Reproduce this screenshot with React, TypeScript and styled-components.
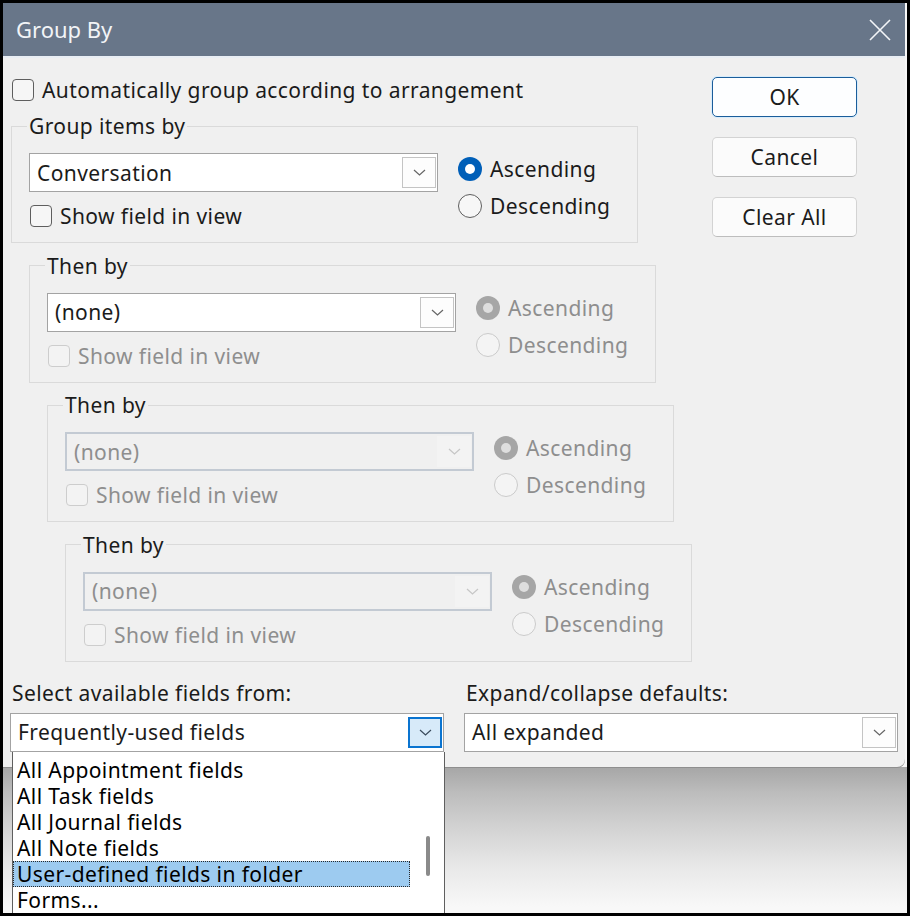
import styled, { createGlobalStyle } from 'styled-components';

const GlobalStyle = createGlobalStyle`
  html, body {
    margin: 0;
    padding: 0;
    background: #000;
  }

  body {
    font-family: 'Noto Sans', 'Open Sans', sans-serif;
    font-size: 21px;
    letter-spacing: 0.4px;
    color: #1b1b1b;
  }
`;

const Chevron = ({ color = '#5f5f5f' }: { color?: string }) => (
  <svg width='13' height='7' viewBox='0 0 13 7'>
    <path d='M1 1 L6.5 6 L12 1' fill='none' stroke={color} strokeWidth='1.2' />
  </svg>
);

type SelectProps = {
  value: string;
  disabled?: boolean;
  focused?: boolean;
};

const Select = ({ value, disabled, focused }: SelectProps) => (
  <SelectBox $disabled={disabled}>
    <span>{value}</span>
    <ArrowButton $disabled={disabled} $focused={focused}>
      <Chevron color={disabled ? '#c6c6c6' : focused ? '#3a4b5c' : '#666666'} />
    </ArrowButton>
  </SelectBox>
);

type GroupProps = {
  title: string;
  indent: number;
  value: string;
  ascending: boolean;
  selectDisabled?: boolean;
  optionsDisabled?: boolean;
};

const SortGroup = ({ title, indent, value, ascending, selectDisabled, optionsDisabled }: GroupProps) => (
  <GroupBox $indent={indent}>
    <Legend>{title}</Legend>
    <GroupInner>
      <FieldStack>
        <Select value={value} disabled={selectDisabled} />
        <CheckRow $disabled={optionsDisabled}>
          <CheckBox $disabled={optionsDisabled} />
          Show field in view
        </CheckRow>
      </FieldStack>
      <RadioStack>
        <RadioRow $disabled={optionsDisabled}>
          <RadioDot $checked={ascending} $disabled={optionsDisabled} />
          Ascending
        </RadioRow>
        <RadioRow $disabled={optionsDisabled}>
          <RadioDot $checked={!ascending} $disabled={optionsDisabled} />
          Descending
        </RadioRow>
      </RadioStack>
    </GroupInner>
  </GroupBox>
);

const fieldSources = [
  'All Appointment fields',
  'All Task fields',
  'All Journal fields',
  'All Note fields',
  'User-defined fields in folder',
  'Forms...',
];

const App = () => {
  return (
    <>
      <GlobalStyle />
      <Screen>
        <Dialog>
          <TitleBar>
            <Title>Group By</Title>
            <CloseButton>
              <svg width='22' height='22' viewBox='0 0 22 22'>
                <path d='M1 1 L21 21 M21 1 L1 21' stroke='#f3f5f8' strokeWidth='1.6' />
              </svg>
            </CloseButton>
          </TitleBar>
          <Body>
            <TopArea>
              <LeftColumn>
                <CheckRow>
                  <CheckBox />
                  Automatically group according to arrangement
                </CheckRow>
                <Groups>
                  <SortGroup title='Group items by' indent={0} value='Conversation' ascending />
                  <SortGroup title='Then by' indent={18} value='(none)' ascending optionsDisabled />
                  <SortGroup title='Then by' indent={36} value='(none)' ascending selectDisabled optionsDisabled />
                  <SortGroup title='Then by' indent={54} value='(none)' ascending selectDisabled optionsDisabled />
                </Groups>
              </LeftColumn>
              <ButtonColumn>
                <DialogButton $primary>OK</DialogButton>
                <DialogButton>Cancel</DialogButton>
                <DialogButton>Clear All</DialogButton>
              </ButtonColumn>
            </TopArea>
            <Footer>
              <Field>
                <FieldLabel>Select available fields from:</FieldLabel>
                <SelectWrap>
                  <Select value='Frequently-used fields' focused />
                  <DropList>
                    {fieldSources.map((item) => (
                      <ListItem key={item} $selected={item.startsWith('User')}>
                        {item}
                      </ListItem>
                    ))}
                    <ScrollThumb />
                  </DropList>
                </SelectWrap>
              </Field>
              <Field>
                <FieldLabel>Expand/collapse defaults:</FieldLabel>
                <Select value='All expanded' />
              </Field>
            </Footer>
          </Body>
        </Dialog>
        <Shade />
      </Screen>
    </>
  );
};

const Screen = styled.div`
  width: 910px;
  height: 916px;
  box-sizing: border-box;
  border: 3px solid #000;
  display: flex;
  flex-direction: column;
  overflow: hidden;
  background: #f7f7f7;
`;

const Dialog = styled.div`
  flex: none;
  width: 902px;
  background: #f0f0f0;
  border-bottom-right-radius: 8px;
  position: relative;
  z-index: 1;
  box-shadow: 0 1px 0 #8e8e8e;
`;

const Shade = styled.div`
  flex: none;
  height: 170px;
  background: linear-gradient(to bottom, #a6a6a6 0px, #bcbcbc 25px, #d2d2d2 60px, #e8e8e8 100px, #f8f8f8 140px);
`;

const TitleBar = styled.div`
  height: 53px;
  background: #687689;
  border-bottom: 2px solid #e9eef4;
  display: flex;
  align-items: center;
  justify-content: space-between;
  padding: 0 14px 0 13px;
`;

const Title = styled.div`
  font-size: 22px;
  letter-spacing: 0;
  color: #f2f4f7;
  margin-top: -2px;
`;

const CloseButton = styled.div`
  width: 22px;
  height: 22px;
  display: flex;
`;

const Body = styled.div`
  padding: 19px 0 15px;
`;

const TopArea = styled.div`
  display: grid;
  grid-template-columns: 680px 145px;
  column-gap: 21px;
  padding-left: 8px;
`;

const LeftColumn = styled.div`
  display: flex;
  flex-direction: column;
`;

const Groups = styled.div`
  display: flex;
  flex-direction: column;
  gap: 9.5px;
  margin-top: 10px;
`;

const CheckRow = styled.label<{ $disabled?: boolean }>`
  display: flex;
  align-items: center;
  gap: 8px;
  height: 26px;
  padding-left: 1px;
  color: ${({ $disabled }) => ($disabled ? '#8e8e8e' : '#1b1b1b')};
  white-space: nowrap;
`;

const CheckBox = styled.span<{ $disabled?: boolean }>`
  width: 22px;
  height: 22px;
  box-sizing: border-box;
  border: 1.5px solid ${({ $disabled }) => ($disabled ? '#cdcdcd' : '#5e5e5e')};
  border-radius: 4px;
  background: ${({ $disabled }) => ($disabled ? '#f3f3f3' : '#f6f6f6')};
  flex-shrink: 0;
`;

const GroupBox = styled.fieldset<{ $indent: number }>`
  margin: 0 0 0 ${({ $indent }) => $indent}px;
  padding: 0 0 13px 17px;
  width: 627px;
  box-sizing: border-box;
  border: 1px solid #dadada;
  min-width: 0;
`;

const Legend = styled.legend`
  padding: 0 2px;
  margin-left: -2px;
  line-height: 26px;
  color: #1b1b1b;
`;

const GroupInner = styled.div`
  display: flex;
  gap: 20px;
  padding-top: 14px;
`;

const FieldStack = styled.div`
  width: 409px;
  display: flex;
  flex-direction: column;
  gap: 11px;
`;

const RadioStack = styled.div`
  display: flex;
  flex-direction: column;
  margin-top: -3px;
`;

const RadioRow = styled.label<{ $disabled?: boolean }>`
  display: flex;
  align-items: center;
  gap: 8px;
  height: 37px;
  color: ${({ $disabled }) => ($disabled ? '#8e8e8e' : '#1b1b1b')};
`;

const RadioDot = styled.span<{ $checked?: boolean; $disabled?: boolean }>`
  width: 24px;
  height: 24px;
  box-sizing: border-box;
  border-radius: 50%;
  flex-shrink: 0;
  position: relative;
  background: ${({ $checked, $disabled }) =>
    $checked ? ($disabled ? '#a6a6a6' : '#005fb8') : $disabled ? '#f4f4f4' : '#f7f7f7'};
  border: ${({ $checked, $disabled }) =>
    $checked ? 'none' : `1.5px solid ${$disabled ? '#cbcbcb' : '#5e5e5e'}`};

  &::after {
    content: '';
    display: ${({ $checked }) => ($checked ? 'block' : 'none')};
    position: absolute;
    left: 50%;
    top: 50%;
    width: 10px;
    height: 10px;
    border-radius: 50%;
    transform: translate(-50%, -50%);
    background: ${({ $disabled }) => ($disabled ? '#dedede' : '#ffffff')};
  }
`;

const SelectBox = styled.div<{ $disabled?: boolean }>`
  height: 39px;
  box-sizing: border-box;
  border: ${({ $disabled }) => ($disabled ? '2px solid #c3cad3' : '1.5px solid #a3a3a3')};
  background: ${({ $disabled }) => ($disabled ? '#f0f0f0' : '#ffffff')};
  color: ${({ $disabled }) => ($disabled ? '#8e8e8e' : '#1b1b1b')};
  display: flex;
  align-items: center;
  justify-content: space-between;
  padding: 0 1px 0 7px;
  white-space: nowrap;
`;

const ArrowButton = styled.span<{ $disabled?: boolean; $focused?: boolean }>`
  width: 34px;
  height: 31px;
  box-sizing: border-box;
  display: flex;
  align-items: center;
  justify-content: center;
  border: ${({ $disabled, $focused }) =>
    $focused ? '2px solid #0a74d0' : $disabled ? '1px solid transparent' : '1px solid #c4c4c4'};
  background: ${({ $focused, $disabled }) => ($focused ? '#d7eaf9' : $disabled ? '#f3f3f3' : '#fdfdfd')};
`;

const ButtonColumn = styled.div`
  display: flex;
  flex-direction: column;
  gap: 20px;
`;

const DialogButton = styled.button<{ $primary?: boolean }>`
  height: 40px;
  font: inherit;
  letter-spacing: inherit;
  color: #1b1b1b;
  border-radius: 5px;
  background: ${({ $primary }) => ($primary ? '#fdfeff' : '#fbfbfb')};
  border: ${({ $primary }) => ($primary ? '1.5px solid #1b5d9a' : '1px solid #d3d3d3')};
  border-bottom-color: ${({ $primary }) => ($primary ? '#1b5d9a' : '#bdbdbd')};
  box-shadow: ${({ $primary }) => ($primary ? '0 0 0 1px #d7ecfb' : 'none')};
  padding: 0;
`;

const Footer = styled.div`
  display: grid;
  grid-template-columns: 1fr 1fr;
  column-gap: 20px;
  padding: 18px 7px 0;
`;

const Field = styled.div`
  display: flex;
  flex-direction: column;
  gap: 7px;
`;

const FieldLabel = styled.div`
  line-height: 26px;
  padding-left: 2px;
`;

const SelectWrap = styled.div`
  position: relative;
`;

const DropList = styled.div`
  position: absolute;
  top: 100%;
  left: 2px;
  width: 433px;
  height: 165px;
  box-sizing: border-box;
  background: #ffffff;
  border: 1px solid #5f5f5f;
  border-top: none;
  padding: 5px 34px 0 0;
  z-index: 2;
`;

const ListItem = styled.div<{ $selected?: boolean }>`
  height: 26px;
  box-sizing: border-box;
  padding-left: 3px;
  white-space: nowrap;
  color: #000;
  background: ${({ $selected }) => ($selected ? '#9dcbf0' : 'transparent')};
  border: 1px ${({ $selected }) => ($selected ? 'dotted #2a2a2a' : 'solid transparent')};
  display: flex;
  align-items: center;
`;

const ScrollThumb = styled.span`
  position: absolute;
  left: 413px;
  top: 84px;
  width: 4px;
  height: 40px;
  border-radius: 2px;
  background: #8a8a8a;
`;

export default App;
